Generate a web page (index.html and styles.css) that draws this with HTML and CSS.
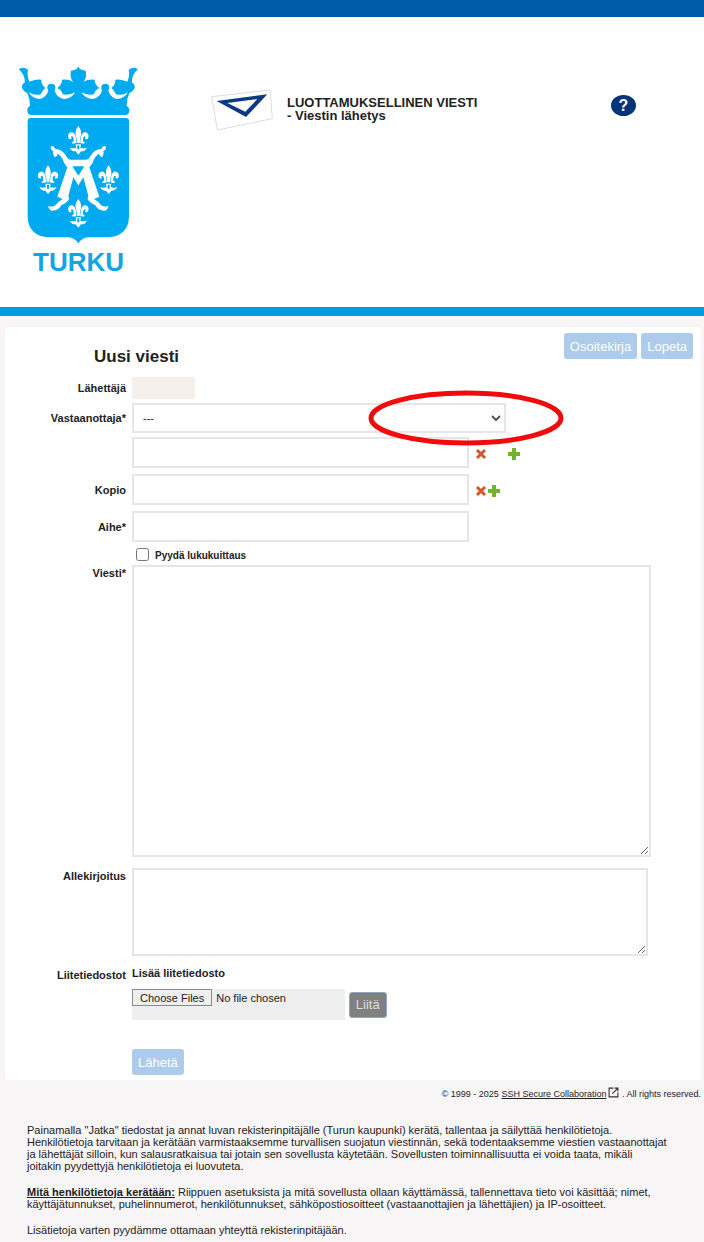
FILE: index.html
```
<!DOCTYPE html>
<html lang="fi">
<head>
    <meta charset="UTF-8">
    <meta name="viewport" content="width=device-width, initial-scale=1.0">
    <title>Luottamuksellinen viesti</title>
    <link rel="stylesheet" href="styles.css">
</head>
<body>
    <header class="header">
        <div class="logo">
            <svg class="logo-arms" viewBox="54 48 363 534" aria-hidden="true">
                <defs>
                    <!-- Kruunun vasen puoli -->
                    <path id="crown" d="M56 58 Q70 48 84 60 Q80 76 88 95 L94 93 Q108 87 124 89 Q123 104 136 114 Q128 119 122 133 Q104 138 86 127 Q98 147 120 147 Q138 142 145 122 Q136 102 154 101 Q172 102 164 122 Q170 142 192 147 Q214 147 226 127 Q208 137 188 133 Q186 121 172 114 Q186 104 186 89 Q206 87 220 96 Q208 82 213 62 Q230 60 235 50 H236 V195 H92 Q80 192 82 178 Q84 170 90 167 Q90 146 82 130 Q60 118 68 102 L74 98 Q76 74 56 58 Z"/>
                    <path id="monogram" d="M152 290 Q160 284 166 297 Q188 298 200 320 Q204 329 212 329 H236 V349 H217 L235 377 H236 V406 H235 L220 382 L205 438 Q209 444 206 450 Q198 460 184 466 Q174 484 154 482 Q146 478 144 468 Q164 474 174 457 L188 447 L172 440 L202 352 Q196 344 192 338 Q186 318 173 311 Q172 320 164 322 Q157 310 160 303 Q152 300 152 290 Z"/>
                    <g id="lily">
                        <path d="M0 -43 Q14 -26 5 -4 L4 8 H-4 L-5 -4 Q-14 -26 0 -43 Z"/>
                        <path id="petal" d="M6 2 Q8 -26 22 -24 Q33 -20 30 -8 Q28 -2 20 -4 Q24 -12 19 -12 Q13 -10 14 3 L20 7 Q16 12 6 8 Z"/>
                        <use href="#petal" transform="scale(-1 1)"/>
                        <path d="M-8 12 H8 L6 22 Q15 26 26 22 Q20 34 8 33 L0 43 L-8 33 Q-20 34 -26 22 Q-15 26 -6 22 Z M-3 15 V27 H3 V15 Z" fill-rule="evenodd"/>
                    </g>
                </defs>
                <g fill="#00aaf0">
                    <use href="#crown"/>
                    <use href="#crown" transform="translate(470 0) scale(-1 1)"/>
                    <path d="M92 204 H378 Q387 204 387 213 V500 Q385 562 315 562 H262 Q244 566 235 580 Q226 566 208 562 H155 Q85 562 83 500 V213 Q83 204 92 204 Z"/>
                </g>
                <g fill="#fff">
                    <use href="#monogram"/>
                    <use href="#monogram" transform="translate(470 0) scale(-1 1)"/>
                    <use href="#lily" x="235" y="271"/>
                    <use href="#lily" x="144" y="389"/>
                    <use href="#lily" x="326" y="389"/>
                    <use href="#lily" x="235" y="490"/>
                </g>
            </svg>
            <span class="logo-name">TURKU</span>
        </div>
        <div class="brand">
            <svg class="envelope" viewBox="30 27 192 126" aria-hidden="true">
                <path d="M35 50 L210 30 L217 116 L52 150 Z" fill="#fff" stroke="#dcdcdc" stroke-width="3"/>
                <path d="M50 63 L202 43 L138 111 Z M82 69 L136 95 L172 57 Z" fill="#0b3a83" fill-rule="evenodd"/>
            </svg>
            <div class="brand-text">LUOTTAMUKSELLINEN VIESTI<br>- Viestin lähetys</div>
        </div>
        <button type="button" class="help" aria-label="Ohje">?</button>
    </header>

    <main class="card">
        <div class="card-head">
            <h1>Uusi viesti</h1>
            <div class="actions">
                <button type="button" class="btn">Osoitekirja</button>
                <button type="button" class="btn">Lopeta</button>
            </div>
        </div>

        <form>
            <div class="row">
                <span class="label">Lähettäjä</span>
                <div class="sender"></div>
            </div>
            <div class="row">
                <label for="recipient">Vastaanottaja*</label>
                <div class="select-wrap">
                    <select id="recipient">
                        <option>---</option>
                    </select>
                    <svg class="chevron" viewBox="0 0 10 8" aria-hidden="true"><path d="M1 2 L5 6 L9 2" fill="none" stroke="#555" stroke-width="2"/></svg>
                    <svg class="highlight" viewBox="0 0 196 56" aria-hidden="true"><ellipse cx="98" cy="28" rx="95" ry="25" fill="none" stroke="#f00c0c" stroke-width="5"/></svg>
                </div>
            </div>
            <div class="row spaced">
                <span></span>
                <div class="line">
                    <input type="text" class="short" aria-label="Vastaanottaja">
                    <div class="icons wide">
                        <button type="button" class="icon" aria-label="Poista"><svg viewBox="0 0 12 12"><path d="M2 2 L10 10 M10 2 L2 10" stroke="#d4552b" stroke-width="3"/></svg></button>
                        <button type="button" class="icon" aria-label="Lisää"><svg viewBox="0 0 12 12"><path d="M6 0 V12 M0 6 H12" stroke="#72b32d" stroke-width="4"/></svg></button>
                    </div>
                </div>
            </div>
            <div class="row spaced">
                <label for="copy">Kopio</label>
                <div class="line">
                    <input type="text" id="copy" class="short">
                    <div class="icons">
                        <button type="button" class="icon" aria-label="Poista kopio"><svg viewBox="0 0 12 12"><path d="M2 2 L10 10 M10 2 L2 10" stroke="#d4552b" stroke-width="3"/></svg></button>
                        <button type="button" class="icon" aria-label="Lisää kopio"><svg viewBox="0 0 12 12"><path d="M6 0 V12 M0 6 H12" stroke="#72b32d" stroke-width="4"/></svg></button>
                    </div>
                </div>
            </div>
            <div class="row tight">
                <label for="subject">Aihe*</label>
                <input type="text" id="subject" class="short">
            </div>
            <div class="row tight">
                <span></span>
                <div class="check">
                    <input type="checkbox" id="receipt">
                    <label for="receipt">Pyydä lukukuittaus</label>
                </div>
            </div>
            <div class="row top">
                <label for="message">Viesti*</label>
                <textarea id="message" class="message"></textarea>
            </div>
            <div class="row top">
                <label for="signature">Allekirjoitus</label>
                <textarea id="signature" class="signature"></textarea>
            </div>
            <div class="row top">
                <span class="label">Liitetiedostot</span>
                <div>
                    <label for="files" class="files-label">Lisää liitetiedosto</label>
                    <div class="line">
                        <input type="file" id="files" class="files" multiple>
                        <button type="button" class="btn attach">Liitä</button>
                    </div>
                    <button type="submit" class="btn send">Lähetä</button>
                </div>
            </div>
        </form>
    </main>

    <footer>
        <div class="copyright">
            © 1999 - 2025 <a href="#">SSH Secure Collaboration<svg class="external" viewBox="0 0 10 10" aria-hidden="true"><path d="M5 1 H1 V9 H9 V5 M6 1 H9 V4 M9 1 L4 6" fill="none" stroke="#333"/></svg></a> . All rights reserved.
        </div>
        <div class="info">
            <p>Painamalla "Jatka" tiedostat ja annat luvan rekisterinpitäjälle (Turun kaupunki) kerätä, tallentaa ja säilyttää henkilötietoja.<br>
            Henkilötietoja tarvitaan ja kerätään varmistaaksemme turvallisen suojatun viestinnän, sekä todentaaksemme viestien vastaanottajat<br>
            ja lähettäjät silloin, kun salausratkaisua tai jotain sen sovellusta käytetään. Sovellusten toiminnallisuutta ei voida taata, mikäli<br>
            joitakin pyydettyjä henkilötietoja ei luovuteta.</p>
            <p><b>Mitä henkilötietoja kerätään:</b> Riippuen asetuksista ja mitä sovellusta ollaan käyttämässä, tallennettava tieto voi käsittää; nimet,<br>
            käyttäjätunnukset, puhelinnumerot, henkilötunnukset, sähköpostiosoitteet (vastaanottajien ja lähettäjien) ja IP-osoitteet.</p>
            <p>Lisätietoja varten pyydämme ottamaan yhteyttä rekisterinpitäjään.</p>
        </div>
    </footer>
</body>
</html>
```
FILE: styles.css
```
* {
    box-sizing: border-box;
}
body {
    margin: 0;
    font-family: "Liberation Sans", Arial, sans-serif;
    font-size: 11px;
    color: #222;
    background-color: #f7f5f6;
}
button, input, select, textarea {
    font-family: inherit;
    font-size: 11px;
    color: #222;
}

/* Header */
.header {
    display: flex;
    align-items: flex-start;
    padding: 49px 68px 27px 18px;
    background-color: white;
    border-top: 17px solid #005ba9;
    border-bottom: 9px solid #009ddc;
}
.logo {
    width: 121px;
    text-align: center;
}
.logo-arms {
    display: block;
    width: 100%;
}
.logo-name {
    display: block;
    font-size: 26px;
    line-height: 36px;
    font-weight: bold;
    color: #12a5e6;
}
.brand {
    display: flex;
    align-items: flex-start;
    gap: 13px;
    margin: 23px 0 0 71px;
}
.envelope {
    width: 64px;
}
.brand-text {
    padding-top: 7px;
    font-size: 13px;
    line-height: 13px;
    font-weight: bold;
}
.help {
    width: 25px;
    height: 21px;
    margin: 29px 0 0 auto;
    padding: 0;
    border: none;
    border-radius: 50%;
    background-color: #003478;
    color: white;
    font-size: 16px;
    line-height: 20px;
    font-weight: bold;
}

/* Form card */
.card {
    margin: 11px 3px 0 5px;
    padding-bottom: 5px;
    background-color: white;
    border-radius: 4px;
}
.card-head {
    display: flex;
    justify-content: space-between;
    padding: 6px 8px 0 89px;
}
h1 {
    margin: 14px 0 10px;
    font-size: 17px;
    line-height: 20px;
}
.actions {
    display: flex;
    align-items: flex-start;
    gap: 4px;
}
.btn {
    height: 26px;
    padding: 0 6px;
    border: none;
    border-radius: 3px;
    background-color: #adcbeb;
    color: white;
    font-size: 13px;
}
form {
    padding-right: 50px;
}
.row {
    display: grid;
    grid-template-columns: 121px 1fr;
    column-gap: 6px;
    align-items: center;
    margin-bottom: 4px;
}
.row.spaced {
    margin-bottom: 6px;
}
.row.tight {
    margin-bottom: 0;
}
.row.top {
    align-items: start;
    margin-bottom: 11px;
}
.row > label, .label {
    text-align: right;
    line-height: 16px;
    font-weight: bold;
}
.sender {
    width: 63px;
    height: 22px;
    background-color: #f5f0eb;
}
input[type="text"], select, textarea {
    border: 2px solid #e6e6e6;
    background-color: white;
    outline: none;
}
input[type="text"] {
    height: 31px;
    padding: 0 8px;
}
.short {
    width: 65%;
}
.select-wrap {
    position: relative;
}
select {
    width: 72%;
    height: 30px;
    padding: 0 9px;
    appearance: none;
}
.chevron {
    position: absolute;
    right: 29%;
    top: 11px;
    width: 10px;
    height: 8px;
}
/* Red marking over the drop-down arrow */
.highlight {
    position: absolute;
    left: 236px;
    top: -13px;
    width: 196px;
    height: 56px;
    pointer-events: none;
}
.line {
    display: flex;
    align-items: center;
}
.icons {
    display: flex;
    gap: 1px;
    margin-left: 6px;
    padding-top: 3px;
}
.icons.wide {
    gap: 21px;
}
.icon {
    width: 12px;
    height: 12px;
    padding: 0;
    border: none;
    background: none;
}
.icon svg {
    display: block;
}
.check {
    display: flex;
    gap: 6px;
    height: 23px;
    padding: 6px 0 0 4px;
}
.check input {
    width: 13px;
    height: 13px;
    margin: 0;
}
.check label {
    line-height: 16px;
    font-size: 10px;
    font-weight: bold;
}
textarea {
    display: block;
    width: 100%;
}
.message {
    height: 292px;
}
.signature {
    width: calc(100% - 3px);
    height: 88px;
}
.files-label {
    display: block;
    margin-bottom: 10px;
    line-height: 12px;
    font-weight: bold;
}
.files {
    width: 41%;
    height: 31px;
    background-color: #efefef;
}
.files::file-selector-button {
    height: 17px;
    margin-right: 4px;
    padding: 0 7px;
    border: 1px solid #8a8a8a;
    background-color: #efefef;
    font-family: inherit;
    font-size: 11px;
    color: #222;
}
.attach {
    margin-left: 4px;
    border: 1px solid #8fa9c4;
    background-color: #808080;
    color: #ddd;
}
.send {
    margin-top: 29px;
}
.row:last-child {
    margin-bottom: 0;
}

/* Footer */
.copyright {
    padding: 7px 3px 0 0;
    text-align: right;
    font-size: 9px;
    line-height: 12px;
}
.copyright a {
    color: inherit;
}
.external {
    width: 11px;
    height: 11px;
    margin-left: 2px;
    vertical-align: -1px;
}
.info {
    padding: 24px 24px 6px 27px;
    line-height: 12px;
}
.info b {
    text-decoration: underline;
}
.info p {
    margin: 0 0 14px;
}
.info p:last-child {
    margin-bottom: 0;
}
```
